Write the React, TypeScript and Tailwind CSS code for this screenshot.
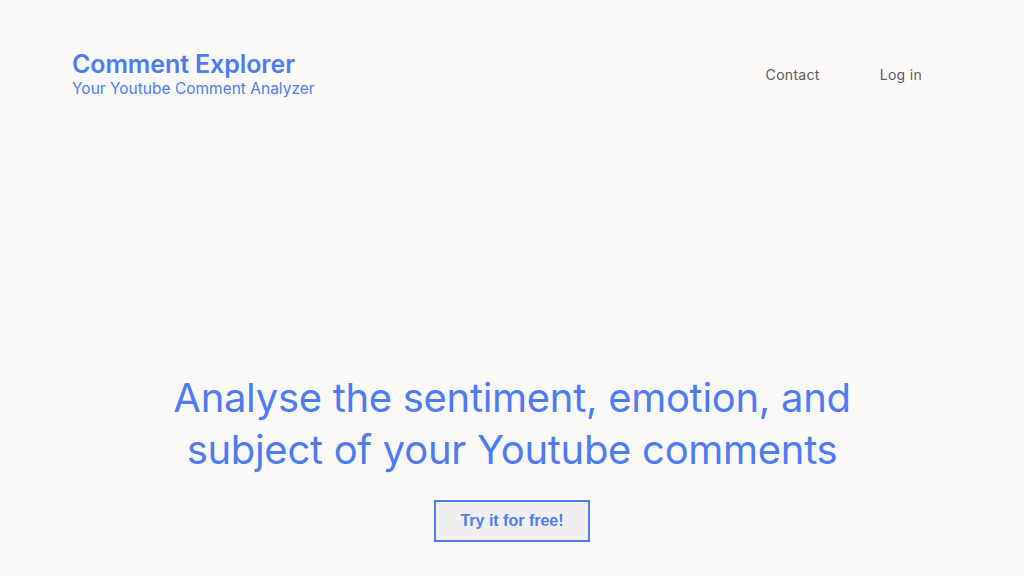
export default function App() {
  return (
    <div
      className="min-h-screen w-full bg-[#faf9f7] text-[#4d7bf3]"
      style={{ fontFamily: 'Inter, "Noto Sans", sans-serif' }}
    >
      <header className="flex items-start justify-between pl-[72px] pr-[102px] pt-[49px]">
        <div>
          <h1 className="text-[25px] font-semibold leading-[30px] tracking-[-0.1px]">Comment Explorer</h1>
          <p className="text-[15.5px] leading-[20px]">Your Youtube Comment Analyzer</p>
        </div>
        <nav className="flex gap-[60px] pt-[15px] text-[14px] tracking-[0.3px] text-[#5a5a5a]">
          <a href="#">Contact</a>
          <a href="#">Log in</a>
        </nav>
      </header>

      <main className="flex flex-col items-center pt-[273px] text-center">
        <h2 className="text-[40px] leading-[52px] tracking-[-0.3px]">
          Analyse the sentiment, emotion, and
          <br />
          subject of your Youtube comments
        </h2>
        <button
          className="mt-[24px] h-[42px] w-[156px] border-2 border-[#4d7bf3] bg-[#efeff1] text-[16px] font-bold text-[#4d7bf3]"
          style={{ fontFamily: '"Liberation Sans", Arial, sans-serif' }}
        >
          Try it for free!
        </button>
      </main>
    </div>
  );
}
